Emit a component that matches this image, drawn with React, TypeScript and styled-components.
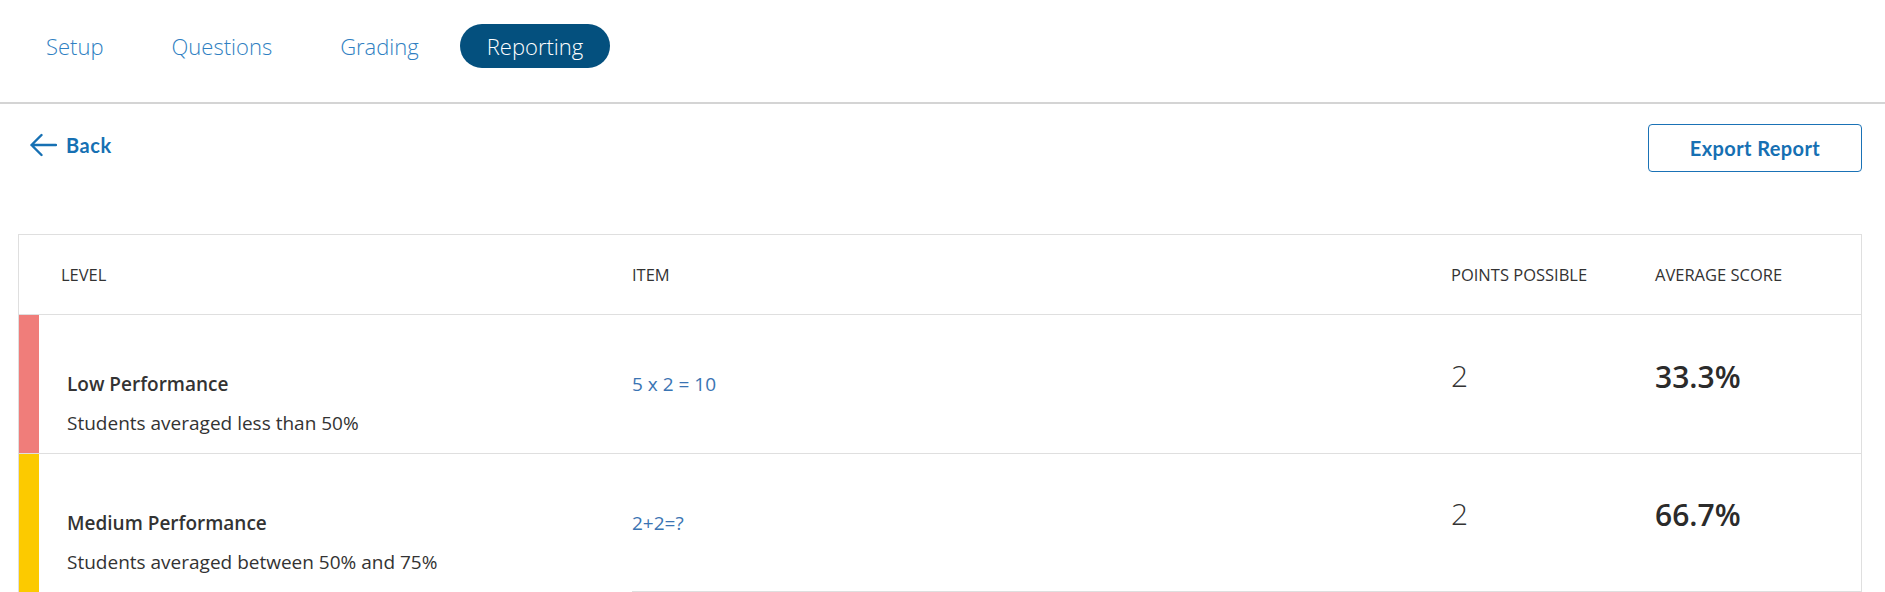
import React from "react";
import styled, { createGlobalStyle } from "styled-components";

const GlobalStyle = createGlobalStyle`
  html, body {
    margin: 0;
    padding: 0;
    background: #ffffff;
  }
  body {
    font-family: "Open Sans", "Noto Sans", sans-serif;
    color: #333333;
  }
  * { box-sizing: border-box; }
`;

const Page = styled.div`
  width: 100%;
  display: flex;
  flex-direction: column;
`;

const Nav = styled.nav`
  height: 104px;
  border-bottom: 2px solid #d4d4d4;
  display: flex;
  align-items: flex-start;
  gap: 14px;
  padding: 24px 0 0 19px;
`;

const Tab = styled.button<{ $active?: boolean }>`
  height: 44px;
  padding: 0 27px;
  border: none;
  border-radius: 22px;
  font-family: "Open Sans", sans-serif;
  font-size: 22px;
  font-weight: 300;
  line-height: 44px;
  background: ${(p) => (p.$active ? "#04507e" : "transparent")};
  color: ${(p) => (p.$active ? "#ffffff" : "#2f7fc2")};
  cursor: pointer;
`;

const Toolbar = styled.div`
  display: flex;
  justify-content: space-between;
  align-items: flex-start;
  padding: 20px 23px 0 29px;
  height: 130px;
`;

const BackLink = styled.a`
  display: flex;
  align-items: center;
  gap: 9px;
  margin-top: 9px;
  font-family: "Lato", sans-serif;
  font-weight: 700;
  font-size: 20px;
  letter-spacing: 0.6px;
  color: #1670b3;
  text-decoration: none;
  cursor: pointer;
`;

const ExportButton = styled.button`
  width: 214px;
  height: 48px;
  border: 1px solid #1a72b6;
  border-radius: 4px;
  background: #ffffff;
  font-family: "Lato", sans-serif;
  font-weight: 700;
  font-size: 20px;
  letter-spacing: 0.4px;
  color: #1670b3;
  cursor: pointer;
`;

const Table = styled.div`
  margin: 0 23px 0 18px;
  border: 1px solid #dfdfdf;
  border-bottom: none;
`;

const HeaderRow = styled.div`
  display: grid;
  grid-template-columns: 613px 819px 204px 1fr;
  height: 80px;
  border-bottom: 1px solid #dfdfdf;
  align-items: center;
`;

const HeadCell = styled.div<{ $pad?: number }>`
  padding-left: ${(p) => p.$pad ?? 0}px;
  font-size: 16.5px;
  font-weight: 400;
  text-transform: uppercase;
  color: #333333;
  margin-top: -1px;
`;

const Row = styled.div<{ $divider?: boolean }>`
  display: grid;
  grid-template-columns: 613px 1fr;
  border-bottom: ${(p) => (p.$divider ? "1px solid #dfdfdf" : "none")};
`;

const LevelCell = styled.div<{ $color: string; $minHeight: number }>`
  display: flex;
  min-height: ${(p) => p.$minHeight}px;
  &::before {
    content: "";
    width: 20px;
    flex: none;
    background: ${(p) => p.$color};
  }
`;

const LevelText = styled.div`
  padding: 57px 0 17px 28px;
`;

const LevelTitle = styled.div`
  font-size: 19px;
  font-weight: 600;
  line-height: 24px;
  color: #333333;
`;

const LevelDesc = styled.div`
  margin-top: 16px;
  font-size: 19px;
  line-height: 23px;
  color: #333333;
`;

const DataGroup = styled.div<{ $closed?: boolean }>`
  display: grid;
  grid-template-columns: 819px 204px 1fr;
  align-items: center;
  align-self: start;
  height: 138px;
  border-bottom: ${(p) => (p.$closed ? "1px solid #dfdfdf" : "none")};
`;

const ItemLink = styled.a`
  font-size: 19px;
  font-weight: 500;
  color: #3a74b3;
  text-decoration: none;
  cursor: pointer;
`;

const Points = styled.div`
  font-size: 30px;
  font-weight: 300;
  color: #333333;
  margin-top: -18px;
`;

const Score = styled.div`
  font-size: 30px;
  font-weight: 600;
  color: #2b2b2b;
  margin-top: -16px;
`;

const BackArrow = () => (
  <svg width="28" height="24" viewBox="0 0 28 24" fill="none">
    <path
      d="M27 12H2.5M12.5 2L2.5 12L12.5 22"
      stroke="#1670b3"
      strokeWidth="2.4"
      strokeLinecap="round"
      strokeLinejoin="round"
    />
  </svg>
);

type Level = {
  title: string;
  desc: string;
  color: string;
  item: string;
  points: number;
  score: string;
};

const levels: Level[] = [
  {
    title: "Low Performance",
    desc: "Students averaged less than 50%",
    color: "#f07d7a",
    item: "5 x 2 = 10",
    points: 2,
    score: "33.3%",
  },
  {
    title: "Medium Performance",
    desc: "Students averaged between 50% and 75%",
    color: "#fcca00",
    item: "2+2=?",
    points: 2,
    score: "66.7%",
  },
];

export default function App() {
  return (
    <Page>
      <GlobalStyle />
      <Nav>
        <Tab>Setup</Tab>
        <Tab>Questions</Tab>
        <Tab>Grading</Tab>
        <Tab $active>Reporting</Tab>
      </Nav>
      <Toolbar>
        <BackLink>
          <BackArrow />
          Back
        </BackLink>
        <ExportButton>Export Report</ExportButton>
      </Toolbar>
      <Table>
        <HeaderRow>
          <HeadCell $pad={42}>Level</HeadCell>
          <HeadCell>Item</HeadCell>
          <HeadCell>Points Possible</HeadCell>
          <HeadCell>Average Score</HeadCell>
        </HeaderRow>
        {levels.map((lv, i) => {
          const last = i === levels.length - 1;
          return (
            <Row key={lv.title} $divider={!last}>
              <LevelCell $color={lv.color} $minHeight={last ? 170 : 138}>
                <LevelText>
                  <LevelTitle>{lv.title}</LevelTitle>
                  <LevelDesc>{lv.desc}</LevelDesc>
                </LevelText>
              </LevelCell>
              <DataGroup $closed={last}>
                <ItemLink>{lv.item}</ItemLink>
                <Points>{lv.points}</Points>
                <Score>{lv.score}</Score>
              </DataGroup>
            </Row>
          );
        })}
      </Table>
    </Page>
  );
}
